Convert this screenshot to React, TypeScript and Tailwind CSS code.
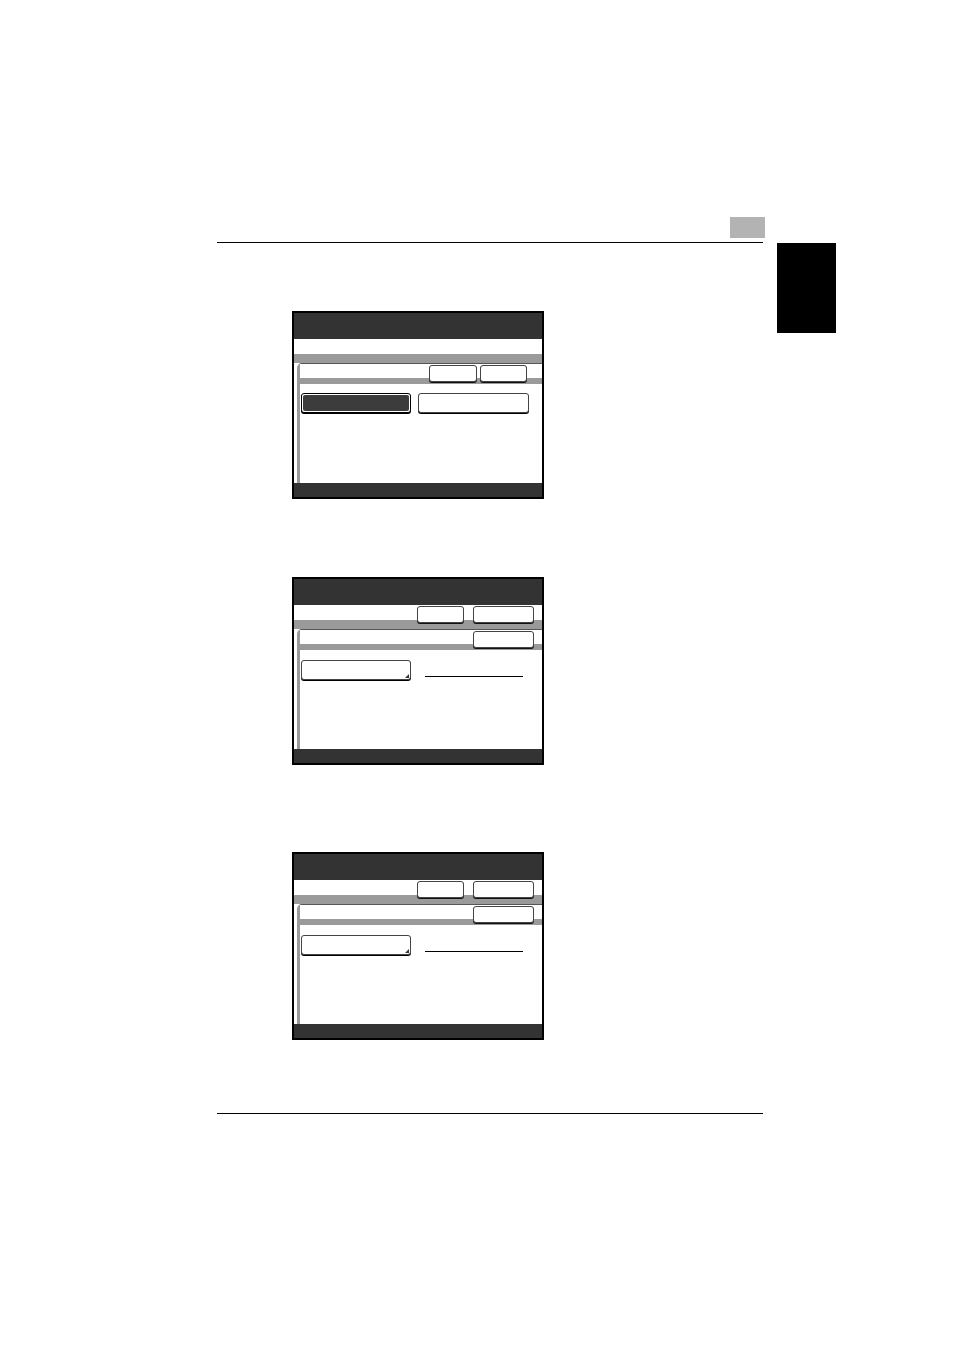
import React from "react";

function Btn({ w, dark, corner }: { w: string; dark?: boolean; corner?: boolean }) {
    if (dark) {
        return (
            <div className={`${w} h-[20px] rounded-[3px] border border-black bg-white p-[1px] shadow-[0_1px_0_#000]`}>
                <div className="h-full w-full rounded-[2px] bg-[#3c3c3c]" />
            </div>
        );
    }
    return (
        <div className={`${w} relative h-[20px] rounded-[3px] border border-[#444] bg-white shadow-[0_1px_0_#000]`}>
            {corner && (
                <svg className="absolute bottom-[1px] right-[1px]" width="4" height="4" viewBox="0 0 4 4">
                    <polygon points="4,0 4,4 0,4" fill="#333" />
                </svg>
            )}
        </div>
    );
}

function SmallBtn({ w }: { w: string }) {
    return <div className={`${w} h-[17px] rounded-[3px] border border-[#444] bg-white shadow-[0_1px_0_#111]`} />;
}

function Screen({ variant }: { variant: "first" | "input" }) {
    const first = variant === "first";
    return (
        <div className="ml-[75px] flex h-[188px] w-[252px] flex-col border-2 border-black bg-white">
            {/* title bar */}
            <div className="h-[26px] bg-[#333]" />

            {/* top strip with gray band */}
            <div className="flex h-[24px] items-start justify-end gap-[9px] bg-[linear-gradient(to_bottom,#fff_15px,#9a9a9a_15px)] pr-[8px] pt-[1px]">
                {!first && (
                    <>
                        <SmallBtn w="w-[47px]" />
                        <SmallBtn w="w-[61px]" />
                    </>
                )}
            </div>

            {/* panel */}
            <div className="ml-[3px] flex flex-1 flex-col rounded-tl-[5px] border-l-[3px] border-t border-l-[#9a9a9a] border-t-[#555] bg-white">
                <div
                    className={`flex h-[20px] items-start justify-end bg-[linear-gradient(to_bottom,#fff_14px,#9a9a9a_14px)] pt-[1px] ${
                        first ? "gap-[3px] pr-[15px]" : "pr-[8px]"
                    }`}
                >
                    {first ? (
                        <>
                            <SmallBtn w="w-[48px]" />
                            <SmallBtn w="w-[47px]" />
                        </>
                    ) : (
                        <SmallBtn w="w-[61px]" />
                    )}
                </div>

                {first ? (
                    <div className="ml-[1px] mt-[9px] flex gap-[7px]">
                        <Btn w="w-[110px]" dark />
                        <Btn w="w-[111px]" />
                    </div>
                ) : (
                    <div className="ml-[1px] mt-[10px] flex items-start">
                        <Btn w="w-[110px]" corner />
                        <div className="ml-[14px] mt-[16px] h-[1px] w-[98px] bg-black" />
                    </div>
                )}
            </div>

            {/* bottom bar */}
            <div className="h-[14px] bg-[#333]" />
        </div>
    );
}

export default function App() {
    return (
        <div className="flex h-[1350px] w-[954px] bg-white pt-[217px] font-['Liberation_Sans',sans-serif]">
            <div className="ml-[217px] flex w-[546px] flex-col">
                {/* page header */}
                <div className="flex justify-end">
                    <div className="-mr-[2px] h-[21px] w-[35px] bg-[#b3b3b3]" />
                </div>
                <div className="mt-[4px] h-[1px] w-full bg-black" />

                <div className="mt-[68px]">
                    <Screen variant="first" />
                </div>
                <div className="mt-[78px]">
                    <Screen variant="input" />
                </div>
                <div className="mt-[87px]">
                    <Screen variant="input" />
                </div>

                {/* page footer */}
                <div className="mt-[73px] h-[1px] w-full bg-black" />
            </div>

            {/* chapter tab */}
            <div className="ml-[14px] mt-[26px] h-[90px] w-[59px] bg-black" />
        </div>
    );
}
